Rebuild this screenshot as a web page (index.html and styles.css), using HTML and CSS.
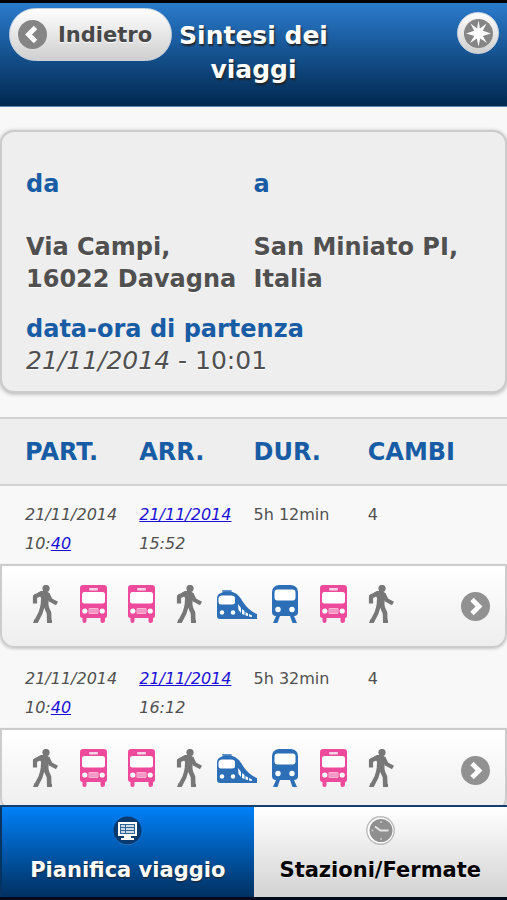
FILE: index.html
```html
<!DOCTYPE html>
<html lang="it">
<head>
<meta charset="utf-8">
<meta name="viewport" content="width=device-width, initial-scale=1">
<title>Sintesi dei viaggi</title>
<link rel="stylesheet" href="styles.css">
</head>
<body>
<svg class="sprite" aria-hidden="true">
  <symbol id="walk" viewBox="0 0 26 38">
    <circle cx="14" cy="3.500" r="3.600" fill="#777"/>
    <path d="M6 7.500 L9 6 H15 L18 9 L16.500 13 L16.500 22 L8.500 23 L9 13 Z" fill="#777"/>
    <g fill="none" stroke="#777" stroke-width="4.200" stroke-linejoin="round">
      <path d="M9.500 8.500 L3 11.500 L3 18.500"/>
      <path d="M15.500 9 L18.500 15 L25 18.500"/>
      <path d="M10.900 20 L8.500 28 L3.800 37"/>
      <path d="M13.500 20 L17 28 L17.300 37" stroke-width="4.600"/>
    </g>
    <path d="M1 38 L2.500 34 L6.500 36 L5.500 38 Z M15 38 V35 H20 V38 Z" fill="#777"/>
  </symbol>
  <symbol id="bus" viewBox="0 0 27 38">
    <path d="M3 0 H24 Q27 0 27 3 V31 Q27 33 25 33 V36 Q25 38 22.500 38 Q20.500 38 20.500 36 V33 H6.500 V36 Q6.500 38 4.500 38 Q2.500 38 2.500 36 V33 Q0 33 0 31 V3 Q0 0 3 0 Z" fill="#ee4a9b"/>
    <rect x="9" y="3" width="9" height="2.500" rx="1" fill="#fbd3e6"/>
    <rect x="2" y="7" width="23" height="11.500" rx="2.500" fill="#fff"/>
    <circle cx="4.800" cy="26" r="2.600" fill="#fff"/>
    <circle cx="22.200" cy="26" r="2.600" fill="#fff"/>
    <rect x="8.500" y="23" width="10" height="6" rx="1" fill="#f9b3d5"/>
    <path d="M9 25 H18 M9 27 H18" stroke="#f07db6"/>
  </symbol>
  <symbol id="train" viewBox="0 0 40 29">
    <path d="M5 1 Q5 0 6 0 H13 Q15 0 15 1 Q15 2 13 2 H6 Q5 2 5 1 Z" fill="#5f91c9"/>
    <path d="M4 3 L7 1.500 H14 L18 3 Q22 5 26 12 Q32 21 40 24 V29 H3 Q0 29 0 26 V9 Q0 4 4 3 Z" fill="#2d6fb7"/>
    <path d="M5 5.500 H14 Q18 5.500 18 8 V12 Q18 14.500 15 14.500 H4 Q1.500 14.500 1.500 12 V8.500 Q2 5.500 5 5.500 Z" fill="#fff"/>
    <circle cx="5" cy="22.500" r="2.200" fill="#fff"/>
    <circle cx="16" cy="22.500" r="2.200" fill="#fff"/>
    <path d="M21 14 L24 18 V23 L21.500 20 Z M25 19 L27.500 21 V25 L25 24 Z M28.500 22 L31 23.500 V26 L28.500 25.500 Z M32 24 L35 25.500 V27 L32 26.500 Z" fill="#fff"/>
  </symbol>
  <symbol id="metro" viewBox="0 0 26 38">
    <path d="M7 0 H19 Q26 1 26 7 V27 Q26 31 22 31 L25 38 H20.500 L18 31 H8 L5.500 38 H1 L4 31 Q0 31 0 27 V7 Q0 1 7 0 Z" fill="#2d6fb7"/>
    <rect x="2.500" y="4.500" width="21" height="11" rx="3" fill="#fff"/>
    <circle cx="6" cy="24.500" r="2.700" fill="#fff"/>
    <circle cx="20" cy="24.500" r="2.700" fill="#fff"/>
  </symbol>
  <symbol id="next" viewBox="0 0 29 29">
    <circle cx="14.500" cy="14.500" r="14.500" fill="#919191"/>
    <path d="M11 7.500 L18 14.500 L11 21.500" fill="none" stroke="#fff" stroke-width="4.800"/>
  </symbol>
</svg>

<header class="topbar">
  <button class="back" type="button">
    <svg class="disc" viewBox="0 0 29 29" aria-hidden="true"><circle cx="14.500" cy="14.500" r="14.500" fill="#858585"/><path d="M17.500 7.500 L10.500 14.500 L17.500 21.500" fill="none" stroke="#fff" stroke-width="4.800"/></svg>
    <span>Indietro</span>
  </button>
  <h1>Sintesi dei viaggi</h1>
  <button class="options" type="button" aria-label="Opzioni">
    <svg class="disc" viewBox="0 0 29 29" aria-hidden="true"><circle cx="14.500" cy="14.500" r="14.500" fill="#858585"/><path d="M14.500 1.500 L16 9.500 L22.500 4.500 L18.800 11.800 L27 14.500 L18.800 17 L23 24 L16.200 19.500 L14.500 27.500 L12.800 19.500 L6 24 L10.200 17 L2 14.500 L10.200 11.800 L6.500 4.500 L13 9.500 Z" fill="#fff"/></svg>
  </button>
</header>

<main class="content">
  <section class="summary">
    <dl class="route">
      <div><dt>da</dt><dd>Via Campi, 16022 Davagna</dd></div>
      <div><dt>a</dt><dd>San Miniato PI, Italia</dd></div>
    </dl>
    <h2>data-ora di partenza</h2>
    <p><i>21/11/2014</i> - 10:01</p>
  </section>

  <table class="trips">
    <thead>
      <tr><th>PART.</th><th>ARR.</th><th>DUR.</th><th>CAMBI</th></tr>
    </thead>
    <tbody>
      <tr class="info">
        <td><div class="date">21/11/2014</div><div class="date">10:<a href="#p1">40</a></div></td>
        <td><div class="date"><a href="#a1">21/11/2014</a></div><div class="date">15:52</div></td>
        <td>5h 12min</td>
        <td>4</td>
      </tr>
      <tr class="modes">
        <td colspan="4">
          <a class="detail" href="#viaggio1" aria-label="Dettaglio viaggio">
            <span class="slot"><svg class="w26"><use href="#walk"/></svg></span>
            <span class="slot"><svg class="w27"><use href="#bus"/></svg></span>
            <span class="slot"><svg class="w27"><use href="#bus"/></svg></span>
            <span class="slot"><svg class="w26"><use href="#walk"/></svg></span>
            <span class="slot"><svg class="w40"><use href="#train"/></svg></span>
            <span class="slot"><svg class="w26"><use href="#metro"/></svg></span>
            <span class="slot"><svg class="w27"><use href="#bus"/></svg></span>
            <span class="slot"><svg class="w26"><use href="#walk"/></svg></span>
            <svg class="disc arrow"><use href="#next"/></svg>
          </a>
        </td>
      </tr>
    </tbody>
    <tbody>
      <tr class="info">
        <td><div class="date">21/11/2014</div><div class="date">10:<a href="#p2">40</a></div></td>
        <td><div class="date"><a href="#a2">21/11/2014</a></div><div class="date">16:12</div></td>
        <td>5h 32min</td>
        <td>4</td>
      </tr>
      <tr class="modes">
        <td colspan="4">
          <a class="detail" href="#viaggio2" aria-label="Dettaglio viaggio">
            <span class="slot"><svg class="w26"><use href="#walk"/></svg></span>
            <span class="slot"><svg class="w27"><use href="#bus"/></svg></span>
            <span class="slot"><svg class="w27"><use href="#bus"/></svg></span>
            <span class="slot"><svg class="w26"><use href="#walk"/></svg></span>
            <span class="slot"><svg class="w40"><use href="#train"/></svg></span>
            <span class="slot"><svg class="w26"><use href="#metro"/></svg></span>
            <span class="slot"><svg class="w27"><use href="#bus"/></svg></span>
            <span class="slot"><svg class="w26"><use href="#walk"/></svg></span>
            <svg class="disc arrow"><use href="#next"/></svg>
          </a>
        </td>
      </tr>
    </tbody>
  </table>
</main>

<nav class="tabs">
  <a class="tab active" href="#pianifica">
    <svg class="disc" viewBox="0 0 29 29" aria-hidden="true">
      <circle cx="14.500" cy="15.500" r="13.500" fill="#4d8fd6"/><circle cx="14.500" cy="14.500" r="14" fill="#08396f"/>
      <path d="M5 6 H24 V20 H18 V22 H21 V24 H8 V22 H11 V20 H5 Z" fill="#fff"/>
      <rect x="7" y="8" width="15" height="10" fill="#2f6496"/>
      <path d="M8 10 H12 M8 13 H12 M8 16 H12 M13 10 H21 M13 13 H21 M13 16 H21" stroke="#fff" stroke-width="1.500"/>
    </svg>
    <span>Pianifica viaggio</span>
  </a>
  <a class="tab" href="#stazioni">
    <svg class="disc" viewBox="0 0 29 29" aria-hidden="true">
      <circle cx="14.500" cy="14.500" r="13.700" fill="#fff" stroke="#bbb" stroke-width="1.400"/>
      <circle cx="15" cy="14.500" r="11.500" fill="#8f8f8f"/>
      <path d="M9 10.500 L14.500 14.500 H22.500" fill="none" stroke="#e6e6e6" stroke-width="2"/>
      <g fill="#c8c8c8"><circle cx="15" cy="6" r="1"/><circle cx="15" cy="23" r="1"/><circle cx="6.500" cy="14.500" r="1"/></g>
    </svg>
    <span>Stazioni/Fermate</span>
  </a>
</nav>
</body>
</html>
```
FILE: styles.css
```css
* { box-sizing: border-box; margin: 0; padding: 0; }

body {
  display: flex;
  flex-direction: column;
  height: 100vh;
  background: #f8f8f8;
  color: #505050;
  font-family: Verdana, "DejaVu Sans", sans-serif;
  font-size: 24px;
  line-height: 32px;
}

.sprite { display: none; }
.disc { width: 29px; height: 29px; flex: none; display: block; }

.topbar {
  display: grid;
  grid-template-columns: 34% 1fr 34%;
  align-items: start;
  padding: 5px 0 19px;
  border-top: 3px solid #000;
  border-bottom: 1px solid #5f86aa;
  background: linear-gradient(#2a7bcd, #002850);
}
.topbar h1 {
  padding-top: 11px;
  color: #fff;
  font-size: 25px;
  line-height: 34px;
  text-align: center;
  text-shadow: 1px 2px 2px #222;
}
.topbar button {
  border: 1px solid #c9d3df;
  background: linear-gradient(#fefefe, #cfcfcf);
  cursor: pointer;
}
.back {
  display: flex;
  align-items: center;
  gap: 11px;
  height: 53px;
  margin-left: 9px;
  padding: 0 8px;
  border-radius: 27px;
  color: #484848;
  font: bold 21px "DejaVu Sans", sans-serif;
  text-shadow: 0 1px 0 #fff;
}
.options {
  display: grid;
  place-items: center;
  justify-self: end;
  width: 42px;
  height: 42px;
  margin: 4px 8px 0 0;
  border-radius: 50%;
}

.content {
  flex: 1;
  min-height: 0;
  overflow-y: auto;
  scrollbar-width: none;
  padding-top: 23px;
}

.summary {
  margin-bottom: 24px;
  padding: 36px 24px 14px;
  border: 2px solid #ccc;
  border-radius: 14px;
  background: #eee;
  box-shadow: 0 1px 4px rgba(0, 0, 0, 0.3);
}
.route {
  display: grid;
  grid-template-columns: 1fr 1fr;
  margin-bottom: 18px;
}
.route dt { margin-bottom: 31px; }
.route dt, .summary h2 {
  color: #175ca4;
  font-size: 24px;
  font-weight: bold;
}
.route dd { font-weight: bold; }
.summary p { font-size: 25px; }
.route dd, .summary p { text-shadow: 0 1px 0 #fff; }

.trips, .trips thead, .trips tbody { display: block; }
.trips tr {
  display: grid;
  grid-template-columns: repeat(4, 1fr);
  padding: 0 25px;
}
.trips thead tr {
  padding-top: 17px;
  padding-bottom: 16px;
  border: solid #d2d2d2;
  border-width: 2px 0;
  background: #eee;
}
.trips th {
  color: #175ca4;
  text-align: left;
}
.trips tbody { margin-bottom: 2px; }
.trips .info {
  padding-top: 14px;
  padding-bottom: 6px;
  font-size: 16px;
  line-height: 29px;
}
.date { font-style: italic; }
.info a { color: #1a10d8; }

.trips .modes { display: block; padding: 0; }
.modes td { display: block; }
.detail {
  display: flex;
  align-items: center;
  height: 84px;
  padding: 0 15px 0 19px;
  border: 2px solid #ccc;
  border-radius: 0 0 14px 14px;
  background: linear-gradient(#fff, #eee);
  box-shadow: 0 1px 3px rgba(0, 0, 0, 0.2);
}
.slot {
  display: flex;
  align-items: center;
  justify-content: center;
  width: 48px;
  height: 42px;
  padding-bottom: 4px;
}
.w26 { width: 26px; height: 38px; }
.w27 { width: 27px; height: 38px; }
.w40 { width: 40px; height: 29px; }
.arrow { margin-left: auto; }

.tabs {
  display: grid;
  grid-template-columns: 1fr 1fr;
  border-top: 2px solid #123f6d;
  border-bottom: 3px solid #000a1c;
}
.tab {
  display: flex;
  flex-direction: column;
  align-items: center;
  gap: 9px;
  padding: 9px 0 11px;
  background: linear-gradient(#fff, #d2d2d2);
  color: #000;
  font-size: 21px;
  font-weight: bold;
  text-decoration: none;
  text-shadow: 0 1px 0 #eee;
}
.tab.active {
  border-left: 2px solid #053362;
  background: linear-gradient(#0080f8, #003060);
  color: #fff;
  text-shadow: 0 1px 2px #222;
}
```
